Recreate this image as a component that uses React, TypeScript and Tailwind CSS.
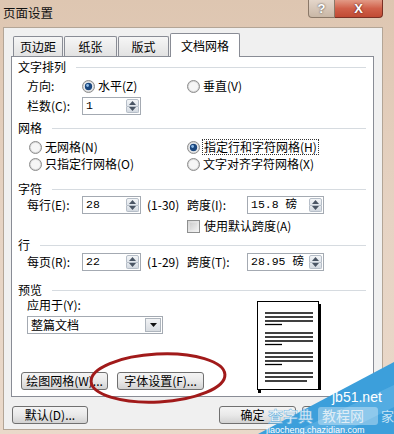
import React from "react";

function Radio({ checked }: { checked?: boolean }) {
  return (
    <svg width="13" height="13" viewBox="0 0 13 13" className="shrink-0">
      <circle cx="6.5" cy="6.5" r="6" fill="#d9d9d9" stroke="#8e8e8e" />
      <circle cx="6.5" cy="6.5" r="4.6" fill="#f6f6f6" />
      {checked && (
        <>
          <circle cx="6.5" cy="6.5" r="3.7" fill="#1b477e" />
          <circle cx="5.6" cy="5.5" r="1.4" fill="#8dbbe8" />
        </>
      )}
    </svg>
  );
}

function Spin() {
  return (
    <div className="w-[15px] h-full flex flex-col p-[1px] shrink-0">
      <div className="flex-1 flex items-center justify-center bg-gradient-to-b from-[#f3f5f7] to-[#dfe4ea] border border-[#b6bec8] rounded-t-[2px]">
        <svg width="7" height="4" viewBox="0 0 7 4">
          <path d="M0 4 L3.5 0 L7 4 Z" fill="#4a5564" />
        </svg>
      </div>
      <div className="flex-1 flex items-center justify-center bg-gradient-to-b from-[#e6eaef] to-[#d3d9e0] border border-t-0 border-[#b6bec8] rounded-b-[2px]">
        <svg width="7" height="4" viewBox="0 0 7 4">
          <path d="M0 0 L3.5 4 L7 0 Z" fill="#4a5564" />
        </svg>
      </div>
    </div>
  );
}

function NumInput({ value, wide }: { value: string; wide?: boolean }) {
  return (
    <div
      className={
        "h-[18px] flex items-stretch border border-[#a4aab2] bg-white shrink-0 " +
        (wide ? "w-[77px]" : "w-[59px]")
      }
    >
      <div className="flex-1 flex items-center pl-[3px] font-['Liberation_Mono','Noto_Sans_CJK_SC',monospace] text-[11.5px]">
        {value}
      </div>
      <Spin />
    </div>
  );
}

function Header({ text }: { text: string }) {
  return (
    <div className="h-[14px] flex items-center">
      <span className="whitespace-nowrap">{text}</span>
      <div className="flex-1 h-px bg-[#d6dbe0] ml-[10px]" />
    </div>
  );
}

function Btn({ children, w }: { children?: React.ReactNode; w: string }) {
  return (
    <div
      className={
        "h-[18px] flex items-center justify-center whitespace-nowrap border border-[#707070] rounded-[3px] bg-gradient-to-b from-[#f4f4f4] via-[#e9e9e9] to-[#d2d2d2] shrink-0 " +
        w
      }
    >
      {children}
    </div>
  );
}

function Page() {
  const groups = [12, 32, 52, 72];
  return (
    <svg width="66" height="92" viewBox="0 0 66 92">
      <rect x="61" y="3" width="3" height="86" fill="#000" />
      <rect x="0.5" y="0.5" width="61" height="88" fill="#fff" stroke="#000" />
      <rect x="1" y="89" width="3" height="3" fill="#000" />
      {groups.map((g, i) => (
        <g key={i} stroke="#000" strokeWidth="1.3">
          <line x1="8" y1={g} x2="56" y2={g} />
          <line x1="8" y1={g + 4} x2="56" y2={g + 4} />
          {i < 3 ? (
            <>
              <line x1="8" y1={g + 8} x2="56" y2={g + 8} />
              <line x1="8" y1={g + 11.5} x2="25" y2={g + 11.5} />
            </>
          ) : (
            <line x1="8" y1={g + 8} x2="50" y2={g + 8} />
          )}
        </g>
      ))}
    </svg>
  );
}

export default function App() {
  return (
    <div className="w-[394px] h-[434px] overflow-hidden relative bg-gradient-to-b from-[#dec6b1] via-[#e6d3c3] to-[#ead9ca] font-['Noto_Sans_CJK_SC',sans-serif] text-[12px] leading-none text-black">
      {/* title bar */}
      <div className="h-[27px] flex items-start">
        <div className="flex-1 pl-[3px] pt-[7px] text-[12.5px] text-[#111]">页面设置</div>
        <div className="flex mr-[11px]">
          <div className="w-[27px] h-[18px] flex items-center justify-center rounded-bl-[4px] border border-t-0 border-[#8a7868] bg-gradient-to-b from-[#e4d6ca] to-[#c9b7a6] text-white font-bold text-[13px] font-['Liberation_Sans',sans-serif] [text-shadow:0_0_2px_#333]">
            ?
          </div>
          <div className="w-[48px] h-[18px] flex items-center justify-center rounded-br-[4px] border border-t-0 border-l-0 border-[#7a3024] bg-gradient-to-b from-[#e29a86] via-[#d0604a] to-[#c04a34] text-white font-bold text-[13px] font-['Liberation_Sans',sans-serif] [text-shadow:0_0_2px_#401010]">
            X
          </div>
        </div>
      </div>

      {/* client */}
      <div className="ml-[3px] w-[380px] h-[403px] bg-[#f0f0f0] border border-[#b3a596] flex flex-col">
        {/* tabs */}
        <div className="relative z-10 flex items-end h-[23px] mt-[5px] pl-[9px] gap-[1px]">
          <div className="w-[50px] h-[20px] flex items-center justify-center border border-b-0 border-[#898c95] rounded-t-[2px] bg-gradient-to-b from-[#f6f6f6] to-[#e2e2e2]">
            页边距
          </div>
          <div className="w-[53px] h-[20px] flex items-center justify-center border border-b-0 border-[#898c95] rounded-t-[2px] bg-gradient-to-b from-[#f6f6f6] to-[#e2e2e2]">
            纸张
          </div>
          <div className="w-[51px] h-[20px] flex items-center justify-center border border-b-0 border-[#898c95] rounded-t-[2px] bg-gradient-to-b from-[#f6f6f6] to-[#e2e2e2]">
            版式
          </div>
          <div className="w-[70px] h-[24px] -mb-px flex items-center justify-center border border-b-0 border-[#898c95] rounded-t-[2px] bg-white">
            文档网格
          </div>
        </div>

        {/* panel */}
        <div className="ml-[7px] w-[363px] h-[341px] border border-[#898c95] bg-white flex flex-col pl-[6px] pr-[7px]">
          <div className="mt-[3px]">
            <Header text="文字排列" />
          </div>
          <div className="mt-[4px] h-[16px] flex items-center pl-[9px]">
            <div className="w-[55px]">方向:</div>
            <div className="w-[105px] flex items-center gap-[3px]">
              <Radio checked />
              <span>水平(Z)</span>
            </div>
            <div className="flex items-center gap-[3px]">
              <Radio />
              <span>垂直(V)</span>
            </div>
          </div>
          <div className="mt-[3px] h-[18px] flex items-center pl-[9px]">
            <div className="w-[55px]">栏数(C):</div>
            <NumInput value="1" />
          </div>

          <div className="mt-[6px]">
            <Header text="网格" />
          </div>
          <div className="mt-[4px] h-[16px] flex items-center pl-[11px]">
            <div className="w-[158px] flex items-center gap-[3px]">
              <Radio />
              <span>无网格(N)</span>
            </div>
            <div className="flex items-center gap-[2px]">
              <Radio checked />
              <span className="border border-dotted border-[#333] px-[1px] py-[1px]">指定行和字符网格(H)</span>
            </div>
          </div>
          <div className="mt-[1px] h-[16px] flex items-center pl-[11px]">
            <div className="w-[158px] flex items-center gap-[3px]">
              <Radio />
              <span>只指定行网格(O)</span>
            </div>
            <div className="flex items-center gap-[3px]">
              <Radio />
              <span>文字对齐字符网格(X)</span>
            </div>
          </div>

          <div className="mt-[10px]">
            <Header text="字符" />
          </div>
          <div className="h-[18px] flex items-center pl-[9px]">
            <div className="w-[55px]">每行(E):</div>
            <NumInput value="28" />
            <div className="w-[46px] pl-[6px] whitespace-nowrap">(1-30)</div>
            <div className="w-[60px]">跨度(I):</div>
            <NumInput value="15.8 磅" wide />
          </div>
          <div className="mt-[4px] h-[16px] flex items-center pl-[169px] gap-[4px]">
            <div className="w-[13px] h-[13px] border border-[#8e8f8f] bg-gradient-to-br from-[#d6d6d6] to-[#f4f4f4] p-[2px]">
              <div className="w-full h-full bg-gradient-to-br from-[#cfcfcf] to-[#ededed]" />
            </div>
            <span>使用默认跨度(A)</span>
          </div>

          <div className="mt-[4px]">
            <Header text="行" />
          </div>
          <div className="mt-[1px] h-[18px] flex items-center pl-[9px]">
            <div className="w-[55px]">每页(R):</div>
            <NumInput value="22" />
            <div className="w-[46px] pl-[6px] whitespace-nowrap">(1-29)</div>
            <div className="w-[60px]">跨度(T):</div>
            <NumInput value="28.95 磅" wide />
          </div>

          <div className="mt-[12px]">
            <Header text="预览" />
          </div>
          <div className="flex">
            <div className="w-[239px] flex flex-col">
              <div className="mt-[1px] h-[14px] flex items-center pl-[9px]">应用于(Y):</div>
              <div className="mt-[4px] ml-[9px] w-[136px] h-[18px] flex items-stretch border border-[#a4aab2] bg-white">
                <div className="flex-1 flex items-center pl-[3px] text-[12px]">整篇文档</div>
                <div className="w-[16px] m-[1px] flex items-center justify-center border border-[#aeb5bd] bg-gradient-to-b from-[#f2f3f5] to-[#d8dce1]">
                  <svg width="7" height="4" viewBox="0 0 7 4">
                    <path d="M0 0 L3.5 4 L7 0 Z" fill="#111" />
                  </svg>
                </div>
              </div>
              <div className="mt-[38px] flex">
                <Btn w="ml-[3px] w-[87px]">绘图网格(W)...</Btn>
                <Btn w="ml-[9px] w-[87px]">字体设置(F)...</Btn>
              </div>
            </div>
            <div className="mt-[4px]">
              <Page />
            </div>
          </div>
        </div>

        {/* bottom buttons */}
        <div className="mt-[9px] flex">
          <Btn w="ml-[8px] w-[76px]">默认(D)...</Btn>
          <Btn w="ml-[131px] w-[77px]">
            <span className="pr-[10px]">确定</span>
          </Btn>
          <Btn w="ml-[6px] w-[77px]" />
        </div>
      </div>

      {/* red ellipse annotation */}
      <svg className="absolute left-[86px] top-[349px] pointer-events-none" width="144" height="58" viewBox="0 0 144 58">
        <ellipse cx="72" cy="29" rx="67" ry="24" fill="none" stroke="#a11a1a" strokeWidth="3" transform="rotate(-3 72 29)" />
      </svg>

      {/* watermark */}
      <svg className="absolute left-[250px] top-[355px] pointer-events-none" width="144" height="79" viewBox="0 0 144 79">
        <polygon points="8,79 144,7 144,79" fill="#3c9fdb" />
        <polygon points="40,79 144,30 144,52 90,79" fill="#62b5e6" opacity="0.6" />
        <text x="82" y="47" fill="#ffffff" fontSize="14" fontFamily="Liberation Sans, sans-serif">jb51.net</text>
        <text x="18" y="67" fill="#ffffff" opacity="0.8" fontSize="15" fontWeight="bold" fontFamily="Noto Sans CJK SC, sans-serif" stroke="#5aaee0" strokeWidth="0.6">查字典</text>
        <rect x="68" y="52" width="60" height="18" rx="3" fill="#ffffff" opacity="0.35" />
        <text x="72" y="66" fill="#e8f2f8" opacity="0.9" fontSize="14" fontFamily="Noto Sans CJK SC, sans-serif">教程网</text>
        <text x="131" y="66" fill="#ffffff" opacity="0.7" fontSize="13" fontFamily="Noto Sans CJK SC, sans-serif">家</text>
        <text x="16" y="78" fill="#ffffff" fontSize="9" fontFamily="Liberation Sans, sans-serif">jiaocheng.chazidian.com</text>
      </svg>
    </div>
  );
}
